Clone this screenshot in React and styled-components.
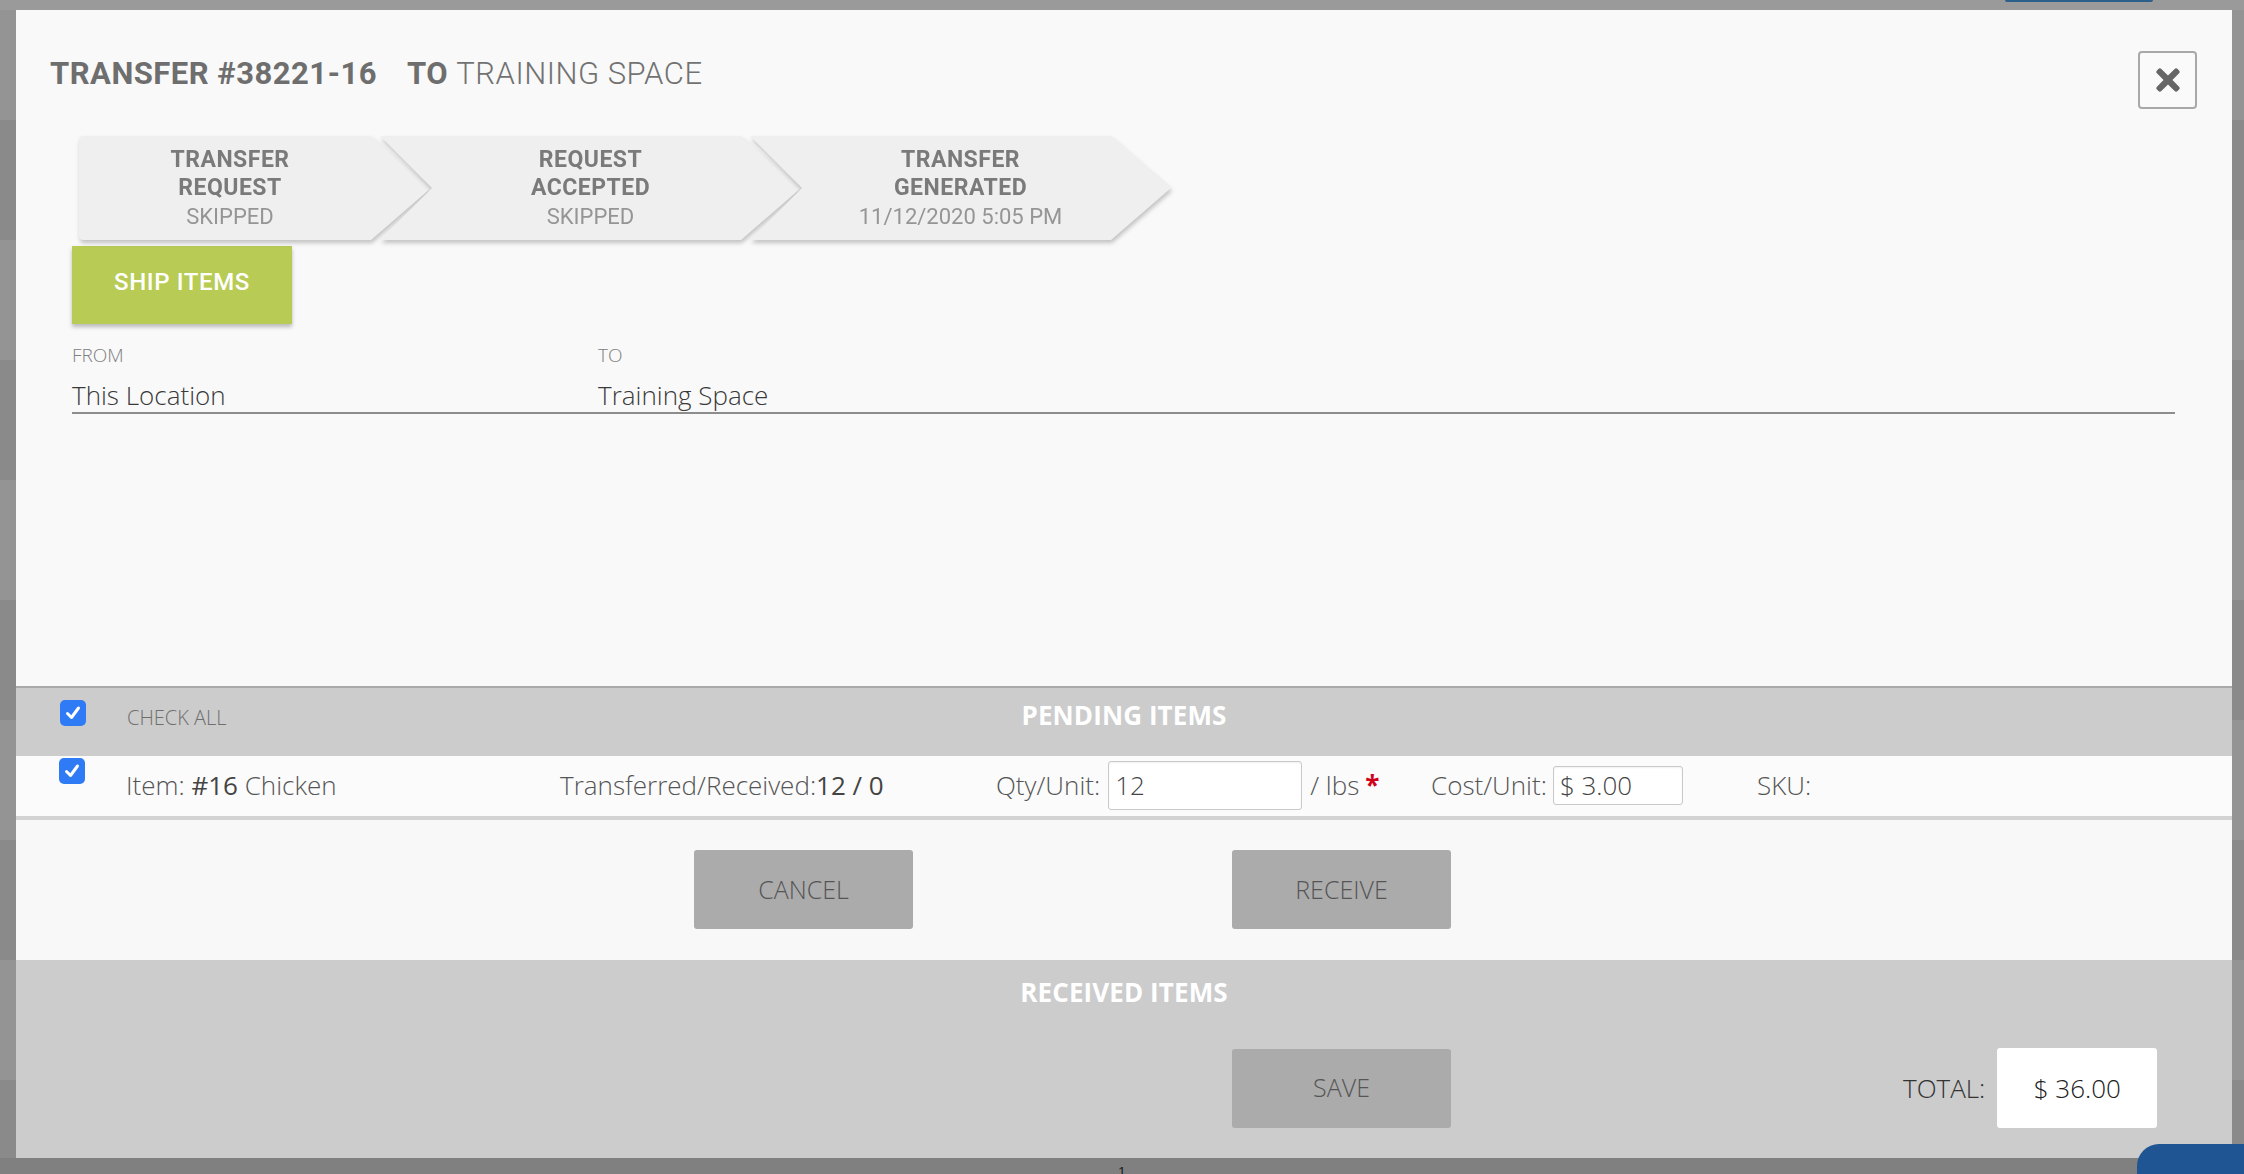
import React from "react";
import styled, { createGlobalStyle } from "styled-components";
import { FaTimes } from "react-icons/fa";

const GlobalStyle = createGlobalStyle`
  html, body {
    margin: 0;
    padding: 0;
  }
  body {
    background: #8e8e8e;
    font-family: "Open Sans", "Liberation Sans", sans-serif;
    overflow: hidden;
  }
`;

const Page = styled.div`
  width: 2244px;
  height: 1174px;
  overflow: hidden;
  display: flex;
  flex-direction: column;
  background: repeating-linear-gradient(180deg, #949494 0 120px, #8a8a8a 120px 240px);
`;

const TopStrip = styled.div`
  height: 10px;
  flex: none;
  display: flex;
  justify-content: flex-end;
  padding-right: 91px;
  background: #9a9a9a;
`;

const BlueTab = styled.div`
  width: 148px;
  height: 2px;
  background: #2d5f8b;
  border-radius: 0 0 3px 3px;
`;

const Stage = styled.div`
  padding-left: 16px;
  flex: none;
`;

const Modal = styled.div`
  width: 2216px;
  height: 1148px;
  background: #f9f9f9;
  display: flex;
  flex-direction: column;
`;

const Below = styled.div`
  flex: 1;
  background: #808080;
  text-align: center;
  font-family: "Liberation Sans", sans-serif;
  font-size: 14px;
  line-height: 16px;
  color: #222;
  padding-top: 6px;
`;

const ChatButton = styled.div`
  position: fixed;
  right: 0;
  bottom: 0;
  width: 107px;
  height: 30px;
  background: #1f5592;
  border-top-left-radius: 22px;
`;

/* header */

const Header = styled.div`
  display: flex;
  justify-content: space-between;
  align-items: flex-start;
  padding: 41px 35px 0 34px;
`;

const Title = styled.h1`
  margin: 5px 0 0;
  font-family: "Roboto", "Liberation Sans", sans-serif;
  font-size: 31px;
  line-height: 36px;
  font-weight: 700;
  color: #6e6e6e;
  letter-spacing: 0.5px;
`;

const Dest = styled.span`
  margin-left: 30px;
  font-weight: 700;

  span {
    font-weight: 300;
    color: #727272;
  }
`;

const CloseButton = styled.button`
  width: 59px;
  height: 58px;
  border: 2px solid #a8a8a8;
  border-radius: 4px;
  background: #fafafa;
  color: #666;
  display: flex;
  align-items: center;
  justify-content: center;
  padding: 0;
  cursor: pointer;
`;

/* steps */

const Steps = styled.div`
  display: flex;
  margin: 27px 0 0 63px;
`;

const StepShadow = styled.div`
  filter: drop-shadow(1px 3px 2px rgba(0, 0, 0, 0.22));
  margin-left: ${p => (p.$first ? "0" : "-51px")};
`;

const StepShape = styled.div`
  width: ${p => (p.$first ? 352 : 421)}px;
  height: 104px;
  background: #efefef;
  box-sizing: border-box;
  padding: 1px 50px 0 ${p => (p.$first ? 0 : 50)}px;
  border-radius: ${p => (p.$first ? "4px 0 0 4px" : "0")};
  clip-path: ${p =>
    p.$first
      ? "polygon(0 0, calc(100% - 60px) 0, 100% 50%, calc(100% - 60px) 100%, 0 100%)"
      : "polygon(0 0, calc(100% - 60px) 0, 100% 50%, calc(100% - 60px) 100%, 0 100%, 52px 50%)"};
  display: flex;
  flex-direction: column;
  align-items: center;
  justify-content: center;
  text-align: center;
`;

const StepName = styled.div`
  font-family: "Roboto", "Liberation Sans", sans-serif;
  font-weight: 700;
  font-size: 23px;
  line-height: 28px;
  color: #7a7a7a;
  letter-spacing: 0.5px;
`;

const StepState = styled.div`
  font-family: "Roboto", "Liberation Sans", sans-serif;
  font-weight: 400;
  font-size: 22px;
  line-height: 30px;
  color: #959595;
`;

const ShipButton = styled.button`
  width: 220px;
  height: 78px;
  margin: 6px 0 0 56px;
  padding: 0 0 6px;
  border: none;
  background: #b8cb55;
  color: #fff;
  font-family: "Roboto", "Liberation Sans", sans-serif;
  font-weight: 500;
  font-size: 24px;
  letter-spacing: 0.6px;
  box-shadow: 0 3px 4px rgba(0, 0, 0, 0.25);
  cursor: pointer;
`;

/* from / to */

const Route = styled.div`
  display: grid;
  grid-template-columns: 526px 1fr;
  margin: 19px 57px 0 56px;
  border-bottom: 2px solid #8d8d8d;
`;

const Field = styled.div`
  display: flex;
  flex-direction: column;
`;

const FieldLabel = styled.div`
  font-size: 19px;
  line-height: 24px;
  font-weight: 300;
  color: #808080;
  margin-bottom: 11px;
`;

const FieldValue = styled.div`
  font-size: 26px;
  line-height: 34px;
  font-weight: 300;
  color: #3a3a3a;
`;

const Spacer = styled.div`
  flex: 1;
`;

/* pending */

const SectionBar = styled.div`
  display: grid;
  grid-template-columns: 1fr auto 1fr;
  align-items: start;
  height: 70px;
  box-sizing: border-box;
  padding-top: 12px;
  background: #cccccc;
  border-top: 2px solid #a9a9a9;
`;

const BarLeft = styled.div`
  display: flex;
  align-items: flex-start;
  padding: 0 0 0 44px;
`;

const CheckAllLabel = styled.span`
  margin: 6px 0 0 41px;
  font-size: 20px;
  line-height: 24px;
  font-weight: 300;
  color: #6f6f6f;
`;

const SectionTitle = styled.div`
  font-family: "Open Sans", "Liberation Sans", sans-serif;
  font-weight: 700;
  font-size: 26px;
  line-height: 30px;
  color: #ffffff;
  letter-spacing: 0.1px;
  text-align: center;
`;

const Box = styled.span`
  flex: none;
  width: 26px;
  height: 26px;
  border-radius: 5px;
  background: #2f7bf6;
  display: flex;
  align-items: center;
  justify-content: center;
  margin-top: ${p => p.$top || 0}px;
  align-self: flex-start;
`;

const ItemRow = styled.div`
  display: flex;
  align-items: center;
  height: 64px;
  box-sizing: border-box;
  padding: 0 0 2px 43px;
  background: #fbfbfb;
  border-bottom: 4px solid #d3d3d3;
  font-size: 26px;
  font-weight: 300;
  color: #555;
`;

const Cell = styled.div`
  flex: none;
  width: ${p => p.$w}px;
  margin-left: ${p => p.$ml || 0}px;
  display: flex;
  align-items: center;
  white-space: nowrap;
`;

const Strong = styled.span`
  font-weight: 400;
  color: #444;
`;

const Input = styled.input`
  box-sizing: border-box;
  width: ${p => p.$w}px;
  height: ${p => p.$h}px;
  margin-left: ${p => p.$ml}px;
  padding: 0 0 0 6px;
  border: 1px solid #c9c9c9;
  border-radius: 3px;
  background: #fff;
  font-family: "Open Sans", "Liberation Sans", sans-serif;
  font-size: 26px;
  font-weight: 300;
  color: #444;
  box-shadow: inset 0 1px 2px rgba(0, 0, 0, 0.06);
`;

const Unit = styled.span`
  margin-left: 8px;
`;

const Required = styled.span`
  margin-left: 6px;
  color: #d0021b;
  font-weight: 700;
`;

const Actions = styled.div`
  display: grid;
  grid-template-columns: 219px 219px;
  column-gap: 319px;
  padding: 30px 0 0 678px;
  height: 140px;
  box-sizing: border-box;
  background: #f8f8f8;
`;

const GreyButton = styled.button`
  width: 219px;
  height: 79px;
  border: none;
  border-radius: 3px;
  background: #ababab;
  color: #555;
  font-family: "Open Sans", "Liberation Sans", sans-serif;
  font-size: 25px;
  font-weight: 300;
  padding: 0 0 2px;
  cursor: pointer;
`;

/* received */

const Received = styled.div`
  flex: none;
  height: 198px;
  box-sizing: border-box;
  background: #cccccc;
  padding-top: 17px;
`;

const ReceivedFoot = styled.div`
  display: flex;
  align-items: center;
  margin-top: 41px;
  padding-left: 1216px;
`;

const TotalLabel = styled.span`
  margin-left: 452px;
  font-size: 26px;
  font-weight: 300;
  color: #333;
`;

const TotalBox = styled.div`
  width: 160px;
  height: 80px;
  margin-left: 12px;
  border-radius: 3px;
  background: #fff;
  display: flex;
  align-items: center;
  justify-content: center;
  font-size: 26px;
  font-weight: 300;
  color: #222;
`;

const Check = ({ top }) => (
  <Box $top={top}>
    <svg width="18" height="18" viewBox="0 0 18 18">
      <path d="M3.5 9.5 L7.5 13.5 L14.5 4" fill="none" stroke="#fff" strokeWidth="3" strokeLinecap="round" strokeLinejoin="round" />
    </svg>
  </Box>
);

const steps = [
  { name: ["TRANSFER", "REQUEST"], state: "SKIPPED" },
  { name: ["REQUEST", "ACCEPTED"], state: "SKIPPED" },
  { name: ["TRANSFER", "GENERATED"], state: "11/12/2020 5:05 PM" },
];

export default function App() {
  return (
    <>
      <GlobalStyle />
      <Page>
        <TopStrip>
          <BlueTab />
        </TopStrip>
        <Stage>
          <Modal>
            <Header>
              <Title>
                TRANSFER #38221-16
                <Dest>
                  TO <span>TRAINING SPACE</span>
                </Dest>
              </Title>
              <CloseButton aria-label="Close">
                <FaTimes size={34} />
              </CloseButton>
            </Header>

            <Steps>
              {steps.map((s, i) => (
                <StepShadow key={i} $first={i === 0}>
                  <StepShape $first={i === 0}>
                    {s.name.map(n => (
                      <StepName key={n}>{n}</StepName>
                    ))}
                    <StepState>{s.state}</StepState>
                  </StepShape>
                </StepShadow>
              ))}
            </Steps>

            <div>
              <ShipButton>SHIP ITEMS</ShipButton>
            </div>

            <Route>
              <Field>
                <FieldLabel>FROM</FieldLabel>
                <FieldValue>This Location</FieldValue>
              </Field>
              <Field>
                <FieldLabel>TO</FieldLabel>
                <FieldValue>Training Space</FieldValue>
              </Field>
            </Route>

            <Spacer />

            <SectionBar>
              <BarLeft>
                <Check />
                <CheckAllLabel>CHECK ALL</CheckAllLabel>
              </BarLeft>
              <SectionTitle>PENDING ITEMS</SectionTitle>
              <div />
            </SectionBar>

            <ItemRow>
              <Check top={2} />
              <Cell $w={434} $ml={41}>
                Item:&nbsp;<Strong>#16</Strong>&nbsp;Chicken
              </Cell>
              <Cell $w={436}>
                Transferred/Received:<Strong>12 / 0</Strong>
              </Cell>
              <Cell $w={435}>
                Qty/Unit:
                <Input $w={194} $h={49} $ml={8} defaultValue="12" />
                <Unit>/ lbs</Unit>
                <Required>*</Required>
              </Cell>
              <Cell $w={326}>
                Cost/Unit:
                <Input $w={130} $h={39} $ml={6} defaultValue="$ 3.00" />
              </Cell>
              <Cell $w={200}>SKU:</Cell>
            </ItemRow>

            <Actions>
              <GreyButton>CANCEL</GreyButton>
              <GreyButton>RECEIVE</GreyButton>
            </Actions>

            <Received>
              <SectionTitle>RECEIVED ITEMS</SectionTitle>
              <ReceivedFoot>
                <GreyButton>SAVE</GreyButton>
                <TotalLabel>TOTAL:</TotalLabel>
                <TotalBox>$ 36.00</TotalBox>
              </ReceivedFoot>
            </Received>
          </Modal>
        </Stage>
        <Below>1</Below>
        <ChatButton />
      </Page>
    </>
  );
}
